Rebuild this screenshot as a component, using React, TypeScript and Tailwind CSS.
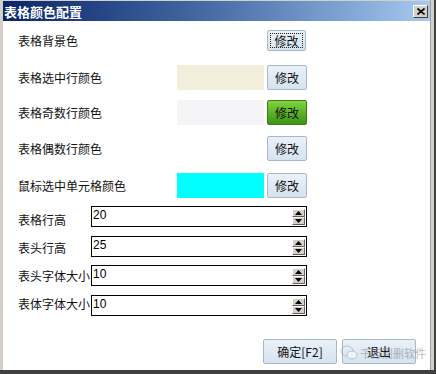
import React from "react";

const Btn = ({ label, green, focus, className = "" }: { label: string; green?: boolean; focus?: boolean; className?: string }) => (
  <div
    className={
      "flex items-center justify-center rounded-[2px] border text-[12px] leading-none text-[#111] " +
      (focus ? "p-[2px] " : "") +
      (green
        ? "border-[#3d7a19] bg-gradient-to-b from-[#7ed43a] to-[#3c9412] "
        : "border-[#a9b8c9] bg-gradient-to-b from-[#eaf1f8] to-[#d6e3f0] ") +
      className
    }
  >
    {focus ? (
      <span className="flex h-full w-full items-center justify-center border border-dotted border-[#222]">{label}</span>
    ) : (
      label
    )}
  </div>
);

const ColorRow = ({ label, color, green, mt }: { label: string; color?: string; green?: boolean; mt: string }) => (
  <div className={"flex h-[25px] items-center " + mt}>
    <div className="w-[159px] text-[12px] leading-none text-[#111]">{label}</div>
    <div className="h-[25px] w-[87px]" style={{ background: color ?? "transparent" }} />
    <Btn label="修改" green={green} className="ml-[3px] h-[25px] w-[40px]" />
  </div>
);

const Spin = () => (
  <div className="mr-[1px] flex flex-col">
    {[0, 1].map((i) => (
      <div
        key={i}
        className="flex h-[8px] w-[13px] items-center justify-center border border-l-white border-t-white border-r-[#606060] border-b-[#606060] bg-[#d4d0c8]"
      >
        <svg width="7" height="4" viewBox="0 0 7 4">
          {i === 0 ? <polygon points="3.5,0 7,4 0,4" fill="#000" /> : <polygon points="0,0 7,0 3.5,4" fill="#000" />}
        </svg>
      </div>
    ))}
  </div>
);

const InputRow = ({ label, value, mt, lmt }: { label: string; value: string; mt: string; lmt: string }) => (
  <div className={"flex h-[21px] items-center " + mt}>
    <div className={"w-[73px] whitespace-nowrap text-[12px] leading-none text-[#111] " + lmt}>{label}</div>
    <div className="flex h-[21px] w-[216px] items-center justify-between border border-black bg-white">
      <span className="self-start pl-[1px] pt-[2px] font-['Liberation_Sans',sans-serif] text-[12px] leading-none text-black">{value}</span>
      <Spin />
    </div>
  </div>
);

export default function App() {
  return (
    <div className="h-[374px] w-[436px] overflow-hidden border-r-2 border-b-4 border-[#404040] bg-[#d4d0c8] font-['Noto_Sans_CJK_SC',sans-serif]">
      <div className="h-[370px] w-[434px] border-r-[3px] border-[#d4d0c8]">
        <div className="relative flex h-[370px] w-[431px] flex-col border-l-[3px] border-t border-r border-[#d4d0c8] border-r-[#a0a0a0] bg-white">
          {/* title bar */}
          <div className="flex h-[20px] items-center justify-between bg-gradient-to-r from-[#0a246a] via-[#4a6ea8] to-[#a6caf0] pl-[1px] pr-[2px]">
            <span className="text-[13px] font-bold leading-none text-white">表格颜色配置</span>
            <div className="flex h-[13px] w-[15px] items-center justify-center border border-l-white border-t-white border-r-[#404040] border-b-[#404040] bg-[#d4d0c8]">
              <svg width="8" height="7" viewBox="0 0 8 7">
                <path d="M0.5 0.5 L7.5 6.5 M7.5 0.5 L0.5 6.5" stroke="#000" strokeWidth="1.6" />
              </svg>
            </div>
          </div>
          {/* body */}
          <div className="flex flex-1 flex-col pl-[15px]">
            <div className="mt-[9px] flex h-[21px] items-center">
              <div className="w-[249px] text-[12px] leading-none text-[#111]">表格背景色</div>
              <Btn label="修改" focus className="h-[21px] w-[39px]" />
            </div>
            <ColorRow label="表格选中行颜色" color="#f1efdc" mt="mt-[14px]" />
            <ColorRow label="表格奇数行颜色" color="#f5f5f8" green mt="mt-[10px]" />
            <ColorRow label="表格偶数行颜色" mt="mt-[11px]" />
            <ColorRow label="鼠标选中单元格颜色" color="#00ffff" mt="mt-[12px]" />
            <InputRow label="表格行高" value="20" mt="mt-[8px]" lmt="mt-[7px]" />
            <InputRow label="表头行高" value="25" mt="mt-[9px]" lmt="mt-[3px]" />
            <InputRow label="表头字体大小" value="10" mt="mt-[8px]" lmt="" />
            <InputRow label="表体字体大小" value="10" mt="mt-[9px]" lmt="mb-[4px]" />
            <div className="mt-[23px] flex gap-[5px] pl-[245px]">
              <Btn label="确定[F2]" className="h-[25px] w-[74px]" />
              <Btn label="退出" className="h-[25px] w-[74px]" />
            </div>
          </div>
          {/* watermark overlay */}
          <div className="pointer-events-none absolute left-[337px] top-[344px] flex items-center gap-[2px] opacity-50">
            <svg width="18" height="16" viewBox="0 0 18 16">
              <ellipse cx="7" cy="6" rx="6" ry="5" fill="none" stroke="#999" strokeWidth="1" />
              <ellipse cx="12" cy="10" rx="5" ry="4" fill="#fff" stroke="#999" strokeWidth="1" />
            </svg>
            <span className="text-[11px] leading-none text-[#777]">千万别删软件</span>
          </div>
        </div>
      </div>
    </div>
  );
}
